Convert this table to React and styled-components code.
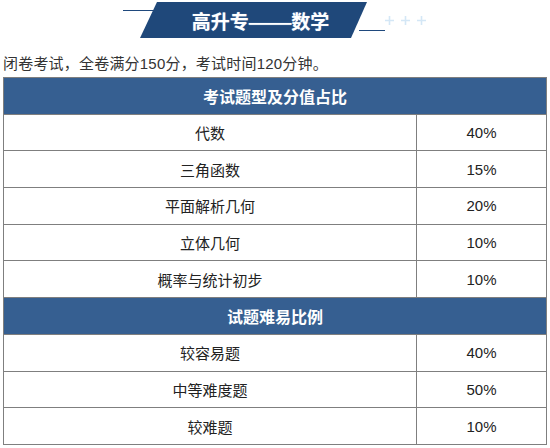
import styled, { createGlobalStyle } from "styled-components";

const GlobalStyle = createGlobalStyle`
  body {
    margin: 0;
    background: #fff;
    font-family: "Liberation Sans", "Noto Sans CJK SC", sans-serif;
    color: #333;
  }
`;

const sections = [
  {
    title: "考试题型及分值占比",
    rows: [
      ["代数", "40%"],
      ["三角函数", "15%"],
      ["平面解析几何", "20%"],
      ["立体几何", "10%"],
      ["概率与统计初步", "10%"],
    ],
  },
  {
    title: "试题难易比例",
    rows: [
      ["较容易题", "40%"],
      ["中等难度题", "50%"],
      ["较难题", "10%"],
    ],
  },
];

function Plus() {
  return (
    <PlusIcon width="9" height="9" viewBox="0 0 9 9">
      <path d="M4.5 0v9M0 4.5h9" stroke="#d4e7f6" strokeWidth="1.6" />
    </PlusIcon>
  );
}

export default function App() {
  return (
    <Page>
      <GlobalStyle />
      <Banner>
        <LeftLine />
        <Ribbon>
          <RibbonText>
            高升专<Dashes>——</Dashes>数学
          </RibbonText>
        </Ribbon>
        <RightLine />
        <Pluses>
          <Plus />
          <Plus />
          <Plus />
        </Pluses>
      </Banner>
      <Intro>闭卷考试，全卷满分150分，考试时间120分钟。</Intro>
      <Table>
        <colgroup>
          <col style={{ width: 413 }} />
          <col />
        </colgroup>
        <tbody>
          {sections.map((section) => [
            <tr key={section.title}>
              <HeadCell colSpan={2}>{section.title}</HeadCell>
            </tr>,
            ...section.rows.map(([name, value]) => (
              <tr key={name}>
                <Cell>{name}</Cell>
                <Cell>{value}</Cell>
              </tr>
            )),
          ])}
        </tbody>
      </Table>
    </Page>
  );
}

const Page = styled.div`
  width: 550px;
`;

const Banner = styled.div`
  display: flex;
  align-items: flex-start;
  padding-top: 2px;
  padding-left: 123px;
  height: 38px;
  box-sizing: border-box;
`;

const LeftLine = styled.div`
  width: 34px;
  height: 1px;
  margin-top: 8px;
  background: #1f497d;
`;

const Ribbon = styled.div`
  width: 227px;
  height: 36px;
  margin-left: -17px;
  background: #1f487a;
  clip-path: polygon(17px 0, 227px 0, 211px 36px, 0 36px);
  display: flex;
  align-items: center;
  justify-content: center;
  padding-left: 14px;
  box-sizing: border-box;
`;

const RibbonText = styled.span`
  color: #fff;
  font-family: "Noto Sans CJK SC", sans-serif;
  font-weight: bold;
  font-size: 19px;
  line-height: 1;
  white-space: nowrap;
  text-shadow: 0 0 1px rgba(200, 220, 255, 0.6);
`;

const Dashes = styled.span`
  display: inline-block;
  margin: 0 5px;
  transform: scaleX(1.4);
`;

const RightLine = styled.div`
  width: 26px;
  height: 1px;
  margin-top: 28px;
  margin-left: -8px;
  background: #1f497d;
`;

const Pluses = styled.div`
  display: flex;
  gap: 7px;
  margin-top: 14px;
`;

const PlusIcon = styled.svg`
  display: block;
`;

const Intro = styled.p`
  margin: 0;
  padding: 15px 0 0 3px;
  font-size: 15px;
  line-height: 22px;
  letter-spacing: 0.2px;
  color: #333;
`;

const Table = styled.table`
  margin: 2px 0 0 3px;
  width: 544px;
  border-collapse: collapse;
  border: 1px solid #7f7f7f;
`;

const HeadCell = styled.td`
  height: 35.7px;
  padding: 0;
  background: #365f91;
  border: 1px solid #7f7f7f;
  color: #fff;
  font-family: "Noto Sans CJK SC", sans-serif;
  font-weight: bold;
  font-size: 16px;
  text-align: center;
  vertical-align: middle;
`;

const Cell = styled.td`
  height: 35.7px;
  padding: 0;
  border: 1px solid #7f7f7f;
  font-size: 15px;
  color: #222;
  text-align: center;
  vertical-align: middle;
`;
